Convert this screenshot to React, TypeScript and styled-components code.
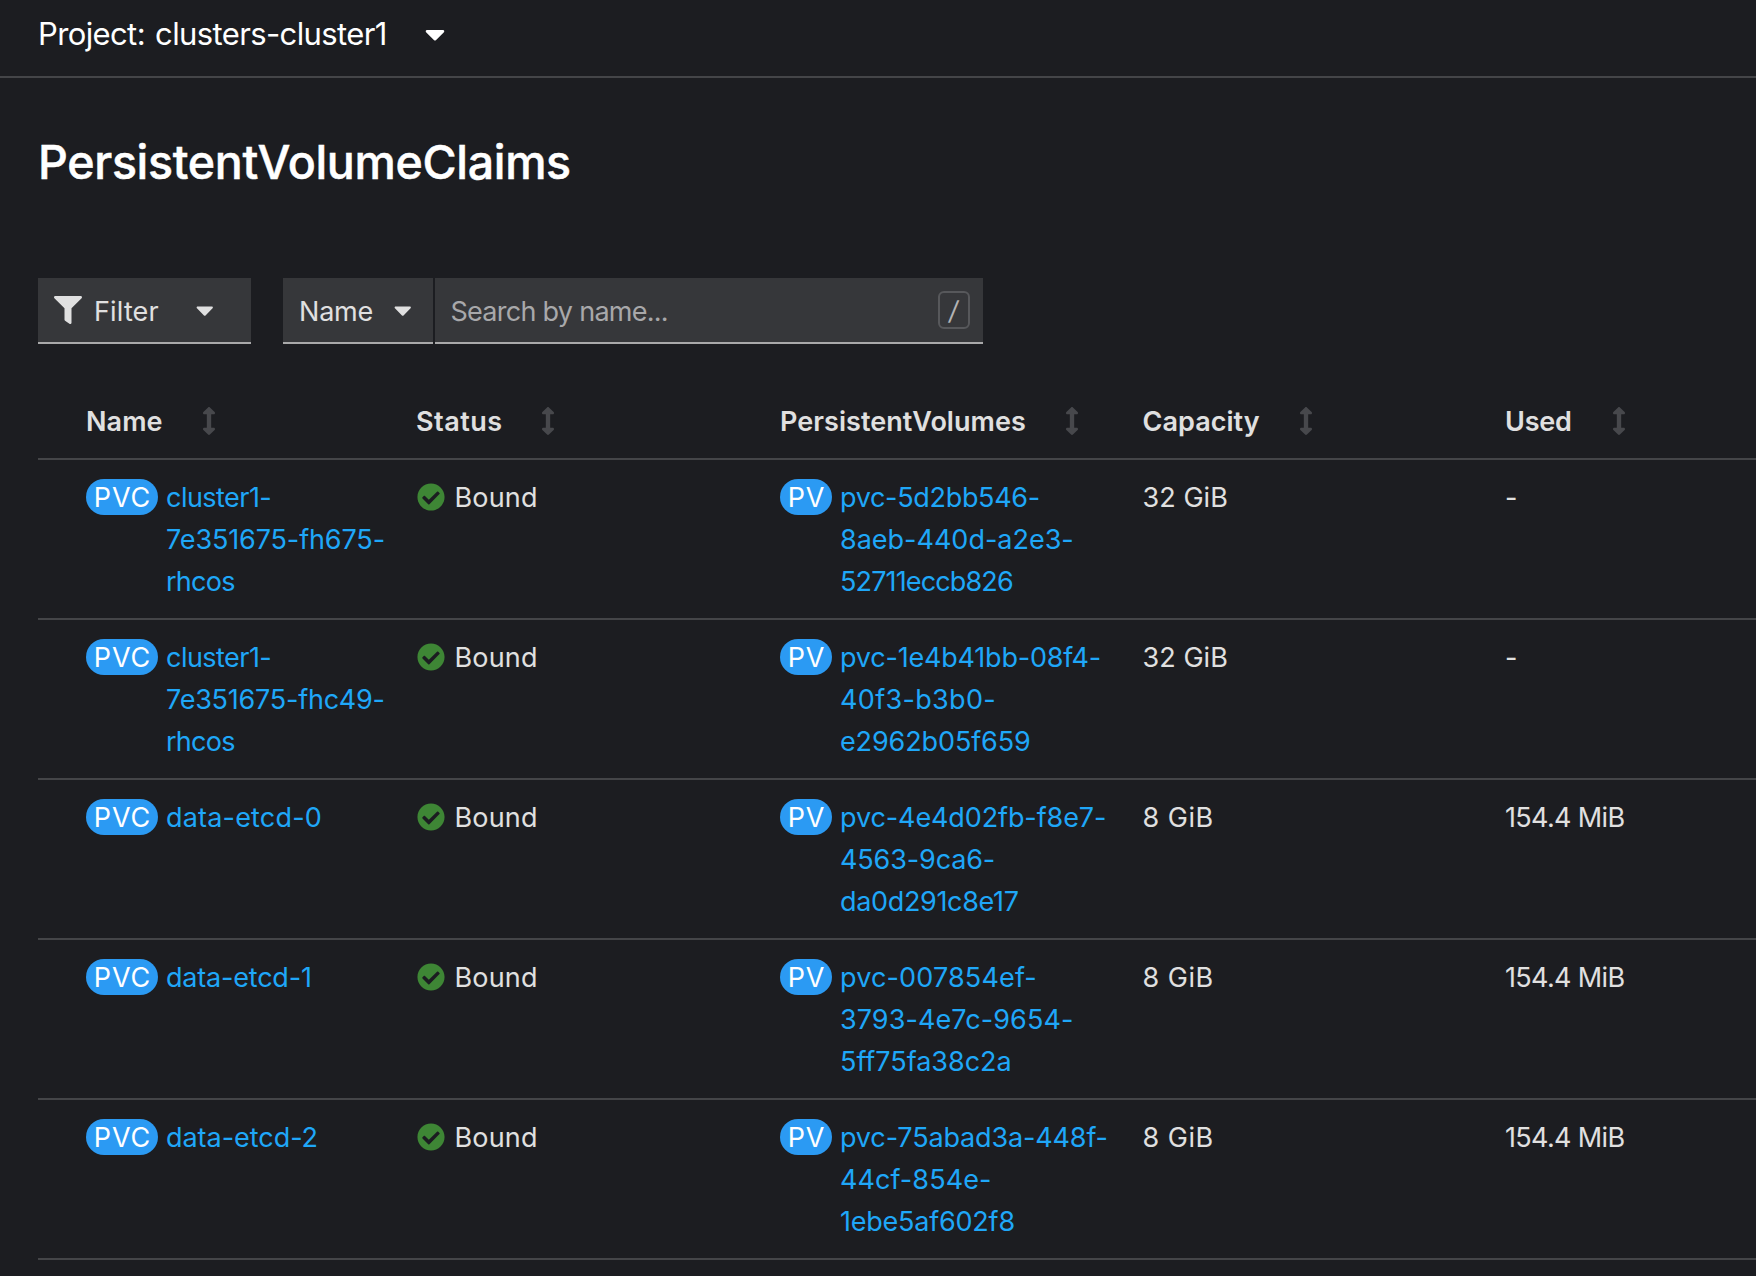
import React from 'react';
import styled, { createGlobalStyle } from 'styled-components';
import { FaArrowsAltV, FaCaretDown, FaCheckCircle, FaFilter } from 'react-icons/fa';

const GlobalStyle = createGlobalStyle`
  *, *::before, *::after { box-sizing: border-box; }
  body {
    margin: 0;
    background: #1c1d21;
    color: #e0e0e0;
    font-family: Inter, "Liberation Sans", sans-serif;
    font-size: 27px;
    line-height: 42px;
    overflow: hidden;
  }
  svg { display: block; flex: none; }
`;

const Page = styled.div`
  height: 1276px;
  overflow: hidden;
`;

const Text = styled.span<{ $track?: number }>`
  display: block;
  white-space: pre;
  letter-spacing: ${({ $track = 0 }) => $track}px;
`;

const ProjectBar = styled.header`
  display: flex;
  align-items: center;
  height: 78px;
  padding: 0 38px 8px;
  border-bottom: 2px solid #444548;
  color: #fff;
  font-size: 31px;
  word-spacing: 2px;
`;

const ProjectCaret = styled(FaCaretDown)`
  width: 20px;
  height: 32px;
  margin-left: 38px;
`;

const Title = styled.h1`
  margin: 0;
  padding: 54px 38px 0;
  color: #fff;
  font-size: 46.5px;
  font-weight: 500;
  line-height: 60px;
  letter-spacing: -0.32px;
  -webkit-text-stroke: 0.5px #fff;
`;

const Toolbar = styled.div`
  display: flex;
  gap: 32px;
  padding: 86px 38px 0;
`;

const ControlGroup = styled.div`
  display: flex;
  gap: 2px;
`;

const Control = styled.button<{ $width: number }>`
  display: flex;
  align-items: center;
  width: ${({ $width }) => $width}px;
  height: 66px;
  padding: 4px 16px 0;
  border: 0;
  border-bottom: 2px solid #a9a9aa;
  background: #36373a;
  color: #e0e0e0;
  font: inherit;
  text-align: left;
`;

const ControlCaret = styled(FaCaretDown)`
  width: 17.5px;
  height: 28px;
  margin: 0 0 4px auto;
`;

const FilterIcon = styled(FaFilter)`
  width: 28px;
  height: 28px;
  margin: 0 12px 4px 0;
`;

const FilterControl = styled(Control)`
  padding-right: 38px;
`;

const NameControl = styled(Control)`
  padding-right: 22px;
`;

const SearchBox = styled.div`
  display: flex;
  align-items: center;
  justify-content: space-between;
  width: 548px;
  height: 66px;
  padding: 0 13px 0 15.5px;
  border-bottom: 2px solid #a9a9aa;
  background: #36373a;
  color: #a8a8aa;
`;

const SearchHint = styled(Text)`
  padding-top: 4px;
`;

const Shortcut = styled.kbd`
  display: flex;
  align-items: center;
  justify-content: center;
  width: 32px;
  height: 38px;
  border: 2px solid #57585b;
  border-radius: 6px;
  color: #b3b3b4;
  font: 26px Inter, sans-serif;
`;

const Slash = styled.span`
  transform: skewX(-8deg);
`;

const Table = styled.div`
  margin: 34px 0 0 38px;
`;

const Row = styled.div`
  display: grid;
  grid-template-columns: 330px 364px 362.5px 362.5px 1fr;
  height: 160px;
  padding: 17px 0 0 48px;
  border-bottom: 2px solid #444548;
`;

const HeadRow = styled(Row)`
  height: 82px;
  padding-top: 23px;
  font-weight: 600;
`;

const HeadCell = styled.div`
  display: flex;
  align-items: flex-start;
`;

const HeadLabel = styled(Text)<{ $width: number }>`
  width: ${({ $width }) => $width}px;
`;

const SortIcon = styled(FaArrowsAltV)`
  width: 14px;
  height: 28px;
  margin-top: 6px;
  color: #47484c;
`;

const Cell = styled.div`
  display: flex;
  align-items: flex-start;
`;

const Badge = styled.span<{ $width: number }>`
  display: flex;
  align-items: center;
  justify-content: center;
  width: ${({ $width }) => $width}px;
  height: 36px;
  margin: 2px 8px 0 0;
  padding: 1px 0 0 1px;
  border-radius: 18px;
  background: #2b9af3;
  color: #fff;
  letter-spacing: 0.9px;
`;

const Link = styled.a`
  color: #1fa7f8;
  text-decoration: none;
`;

const BoundIcon = styled(FaCheckCircle)`
  width: 28px;
  height: 28px;
  margin: 6px 9.5px 0 1px;
  color: #3e8635;
`;

type Line = [text: string, track: number];

interface Claim {
  name: Line[];
  volume: Line[];
  capacity: Line;
  used: Line;
}

const rhcos: Line = ['rhcos', -0.75];
const cap32: Line = ['32 GiB', 0.06];
const cap8: Line = ['8 GiB', 0.5];
const used154: Line = ['154.4 MiB', -0.65];
const none: Line = ['-', 0];

const claims: Claim[] = [
  {
    name: [['cluster1-', -0.54], ['7e351675-fh675-', -0.13], rhcos],
    volume: [['pvc-5d2bb546-', -0.32], ['8aeb-440d-a2e3-', -0.01], ['52711eccb826', -0.86]],
    capacity: cap32,
    used: none,
  },
  {
    name: [['cluster1-', -0.54], ['7e351675-fhc49-', -0.24], rhcos],
    volume: [['pvc-1e4b41bb-08f4-', -0.2], ['40f3-b3b0-', 0.33], ['e2962b05f659', -0.12]],
    capacity: cap32,
    used: none,
  },
  {
    name: [['data-etcd-0', 0.18]],
    volume: [['pvc-4e4d02fb-f8e7-', -0.11], ['4563-9ca6-', -0.13], ['da0d291c8e17', -0.34]],
    capacity: cap8,
    used: used154,
  },
  {
    name: [['data-etcd-1', -0.2]],
    volume: [['pvc-007854ef-', 0.15], ['3793-4e7c-9654-', 0.08], ['5ff75fa38c2a', -0.02]],
    capacity: cap8,
    used: used154,
  },
  {
    name: [['data-etcd-2', -0.04]],
    volume: [['pvc-75abad3a-448f-', -0.15], ['44cf-854e-', 0.08], ['1ebe5af602f8', -0.22]],
    capacity: cap8,
    used: used154,
  },
];

const columns = [
  { label: 'Name', width: 116, track: 0.1 },
  { label: 'Status', width: 125, track: 0.5 },
  { label: 'PersistentVolumes', width: 285, track: 0.05 },
  { label: 'Capacity', width: 156.5, track: 0.05 },
  { label: 'Used', width: 107, track: -0.2 },
];

function ResourceLink({ kind, width, lines }: { kind: string; width: number; lines: Line[] }) {
  return (
    <Cell>
      <Badge $width={width}>{kind}</Badge>
      <Link>
        {lines.map(([text, track]) => (
          <Text key={text} $track={track}>{text}</Text>
        ))}
      </Link>
    </Cell>
  );
}

export default function App() {
  return (
    <Page>
      <GlobalStyle />
      <ProjectBar>
        <Text $track={-0.62}>Project: clusters-cluster1</Text>
        <ProjectCaret />
      </ProjectBar>
      <Title>PersistentVolumeClaims</Title>
      <Toolbar>
        <FilterControl $width={213}>
          <FilterIcon />
          <Text $track={0.16}>Filter</Text>
          <ControlCaret />
        </FilterControl>
        <ControlGroup>
          <NameControl $width={150}>
            <Text $track={-0.2}>Name</Text>
            <ControlCaret />
          </NameControl>
          <SearchBox>
            <SearchHint $track={-0.73}>Search by name...</SearchHint>
            <Shortcut>
              <Slash>/</Slash>
            </Shortcut>
          </SearchBox>
        </ControlGroup>
      </Toolbar>
      <Table>
        <HeadRow>
          {columns.map(({ label, width, track }) => (
            <HeadCell key={label}>
              <HeadLabel $width={width} $track={track}>{label}</HeadLabel>
              <SortIcon />
            </HeadCell>
          ))}
        </HeadRow>
        {claims.map((claim) => (
          <Row key={claim.volume[0][0]}>
            <ResourceLink kind="PVC" width={72} lines={claim.name} />
            <Cell>
              <BoundIcon />
              <Text $track={0.16}>Bound</Text>
            </Cell>
            <ResourceLink kind="PV" width={52} lines={claim.volume} />
            <Cell>
              <Text $track={claim.capacity[1]}>{claim.capacity[0]}</Text>
            </Cell>
            <Cell>
              <Text $track={claim.used[1]}>{claim.used[0]}</Text>
            </Cell>
          </Row>
        ))}
      </Table>
    </Page>
  );
}
